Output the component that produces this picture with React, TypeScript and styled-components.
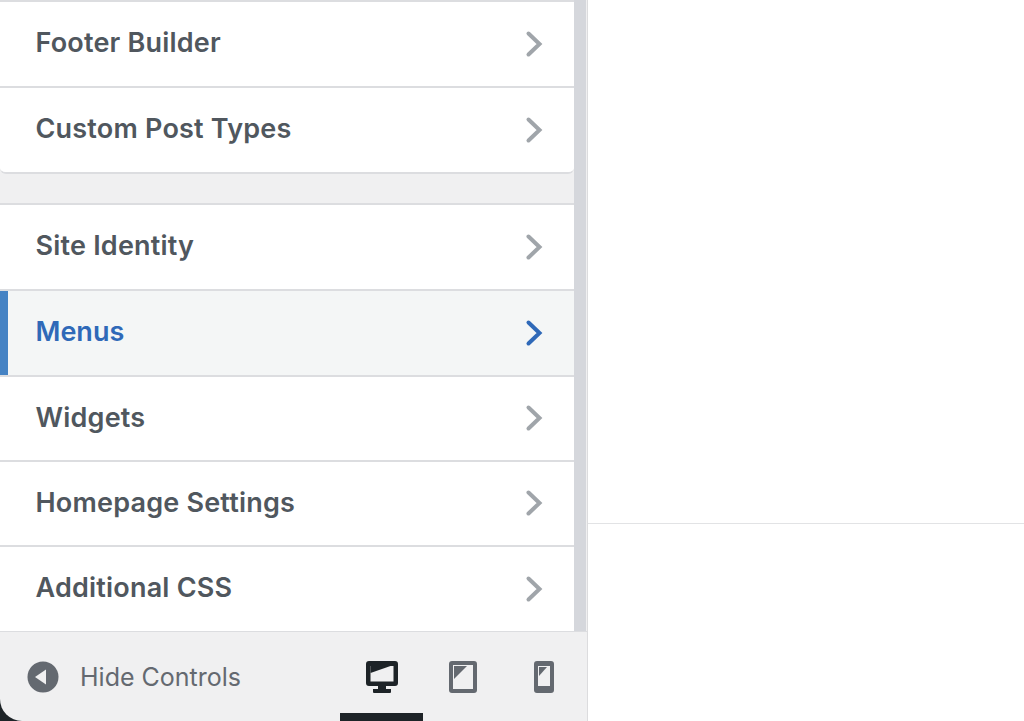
import React from 'react'
import styled, { createGlobalStyle } from 'styled-components'

const GlobalStyle = createGlobalStyle`
  html, body {
    margin: 0;
    padding: 0;
    height: 721px;
    overflow: hidden;
    background: #fff;
  }
`

const Screen = styled.div`
  background: #1d2327;
  display: flex;
  font-family: Inter, 'Liberation Sans', sans-serif;
  height: 721px;
  width: 1024px;
`

const Sidebar = styled.div`
  background: #f0f0f1;
  border-bottom-left-radius: 22px;
  border-right: 1px solid #dcdcde;
  display: flex;
  flex-direction: column;
  height: 721px;
  overflow: hidden;
  width: 587px;
`

const Scroller = styled.div`
  display: flex;
  flex: 1;
  min-height: 0;
`

const List = styled.div`
  display: flex;
  flex-direction: column;
  width: 574px;
`

const ScrollTrack = styled.div`
  background: #d5d7dc;
  width: 12px;
`

const Group = styled.div`
  border-bottom: 2px solid #dcdde0;
  border-bottom-left-radius: 6px;
  border-bottom-right-radius: 6px;
  overflow: hidden;
`

const Gap = styled.div`
  height: 29px;
`

const Row = styled.div<{ $active?: boolean; $height: number }>`
  align-items: center;
  background: ${p => (p.$active ? '#f4f6f6' : '#fff')};
  border-top: 2px solid #dcdde0;
  box-shadow: ${p => (p.$active ? 'inset 8px 0 0 #4583c4' : 'none')};
  box-sizing: border-box;
  color: ${p => (p.$active ? '#2f69b8' : '#50575e')};
  display: flex;
  font-size: 27px;
  font-weight: 600;
  height: ${p => p.$height}px;
  justify-content: space-between;
  letter-spacing: ${p => (p.$active ? 0 : 0.2)}px;
  padding: 0 30px 1px 35.5px;
`

const RowLabel = styled.span`
  padding-bottom: 2px;
`

const Chevron = styled.svg<{ $active?: boolean }>`
  color: ${p => (p.$active ? '#2f69b8' : '#a0a5aa')};
  display: block;
  height: 28px;
  width: 20px;
`

const Footer = styled.div`
  align-items: center;
  border-top: 1px solid #dcdde0;
  box-sizing: border-box;
  display: flex;
  height: 90px;
  justify-content: space-between;
  padding: 0 33px 0 27px;
`

const HideButton = styled.div`
  align-items: center;
  color: #646970;
  display: flex;
  font-size: 25px;
  font-weight: 400;
  gap: 21px;
`

const Devices = styled.div`
  align-items: center;
  display: flex;
`

const DeviceButton = styled.div<{ $active?: boolean; $gap: number }>`
  color: ${p => (p.$active ? '#1d2327' : '#646970')};
  display: flex;
  margin-left: ${p => p.$gap}px;
  position: relative;

  ${p =>
    p.$active &&
    `
    &::after {
      background: #1d2327;
      bottom: -28px;
      content: '';
      height: 8px;
      left: -26px;
      position: absolute;
      width: 83px;
    }
  `}
`

const Preview = styled.div`
  background: #fff;
  flex: 1;
`

const PreviewTop = styled.div`
  border-bottom: 1px solid #e2e3e5;
  height: 523px;
`

const ChevronIcon = ({ active }: { active?: boolean }) => (
  <Chevron $active={active} viewBox="0 0 20 28">
    <path d="M4.500 3.500 L15.500 14 L4.500 24.500" fill="none" stroke="currentColor" strokeWidth="4" strokeLinecap="round" strokeLinejoin="miter" />
  </Chevron>
)

const MenuRow = ({ label, height, active }: { label: string; height: number; active?: boolean }) => (
  <Row $active={active} $height={height}>
    <RowLabel>{label}</RowLabel>
    <ChevronIcon active={active} />
  </Row>
)

export default function App() {
  return (
    <Screen>
      <GlobalStyle />
      <Sidebar>
        <Scroller>
          <List>
            <Group>
              <MenuRow label="Footer Builder" height={86} />
              <MenuRow label="Custom Post Types" height={86} />
            </Group>
            <Gap />
            <MenuRow label="Site Identity" height={86} />
            <MenuRow label="Menus" height={86} active />
            <MenuRow label="Widgets" height={85} />
            <MenuRow label="Homepage Settings" height={85} />
            <MenuRow label="Additional CSS" height={86} />
          </List>
          <ScrollTrack />
        </Scroller>
        <Footer>
          <HideButton>
            <svg width="32" height="32" viewBox="0 0 32 32">
              <circle cx="16" cy="16" r="15.500" fill="#646970" />
              <path d="M8 16 L19 8.500 V23.500 Z" fill="#f0f0f1" />
            </svg>
            Hide Controls
          </HideButton>
          <Devices>
            <DeviceButton $active $gap={0}>
              <svg width="32" height="32" viewBox="0 0 32 32" fill="currentColor">
                <path d="M3 0 H29 A3 3 0 0 1 32 3 V22 A3 3 0 0 1 29 25 H20 V28 H25 V31 A1 1 0 0 1 24 32 H8 A1 1 0 0 1 7 31 V28 H12 V25 H3 A3 3 0 0 1 0 22 V3 A3 3 0 0 1 3 0 Z" />
                <path d="M4.500 5 H27.500 V20.500 H4.500 Z" fill="#f0f0f1" />
                <path d="M4.500 5 H24.500 L4.500 12 Z" fill="currentColor" />
              </svg>
            </DeviceButton>
            <DeviceButton $gap={51}>
              <svg width="28" height="32" viewBox="0 0 28 32" fill="currentColor">
                <path fillRule="evenodd" d="M3 0 H25 A3 3 0 0 1 28 3 V29 A3 3 0 0 1 25 32 H3 A3 3 0 0 1 0 29 V3 A3 3 0 0 1 3 0 Z M4 4 V28 H24 V4 Z" />
                <path d="M5 5 H18 L5 18 Z" />
              </svg>
            </DeviceButton>
            <DeviceButton $gap={57}>
              <svg width="20" height="32" viewBox="0 0 20 32" fill="currentColor">
                <path fillRule="evenodd" d="M3 0 H17 A3 3 0 0 1 20 3 V29 A3 3 0 0 1 17 32 H3 A3 3 0 0 1 0 29 V3 A3 3 0 0 1 3 0 Z M4 5 V25 H16 V5 Z" />
                <path d="M5 6 H13 L5 15 Z" />
              </svg>
            </DeviceButton>
          </Devices>
        </Footer>
      </Sidebar>
      <Preview>
        <PreviewTop />
      </Preview>
    </Screen>
  )
}
